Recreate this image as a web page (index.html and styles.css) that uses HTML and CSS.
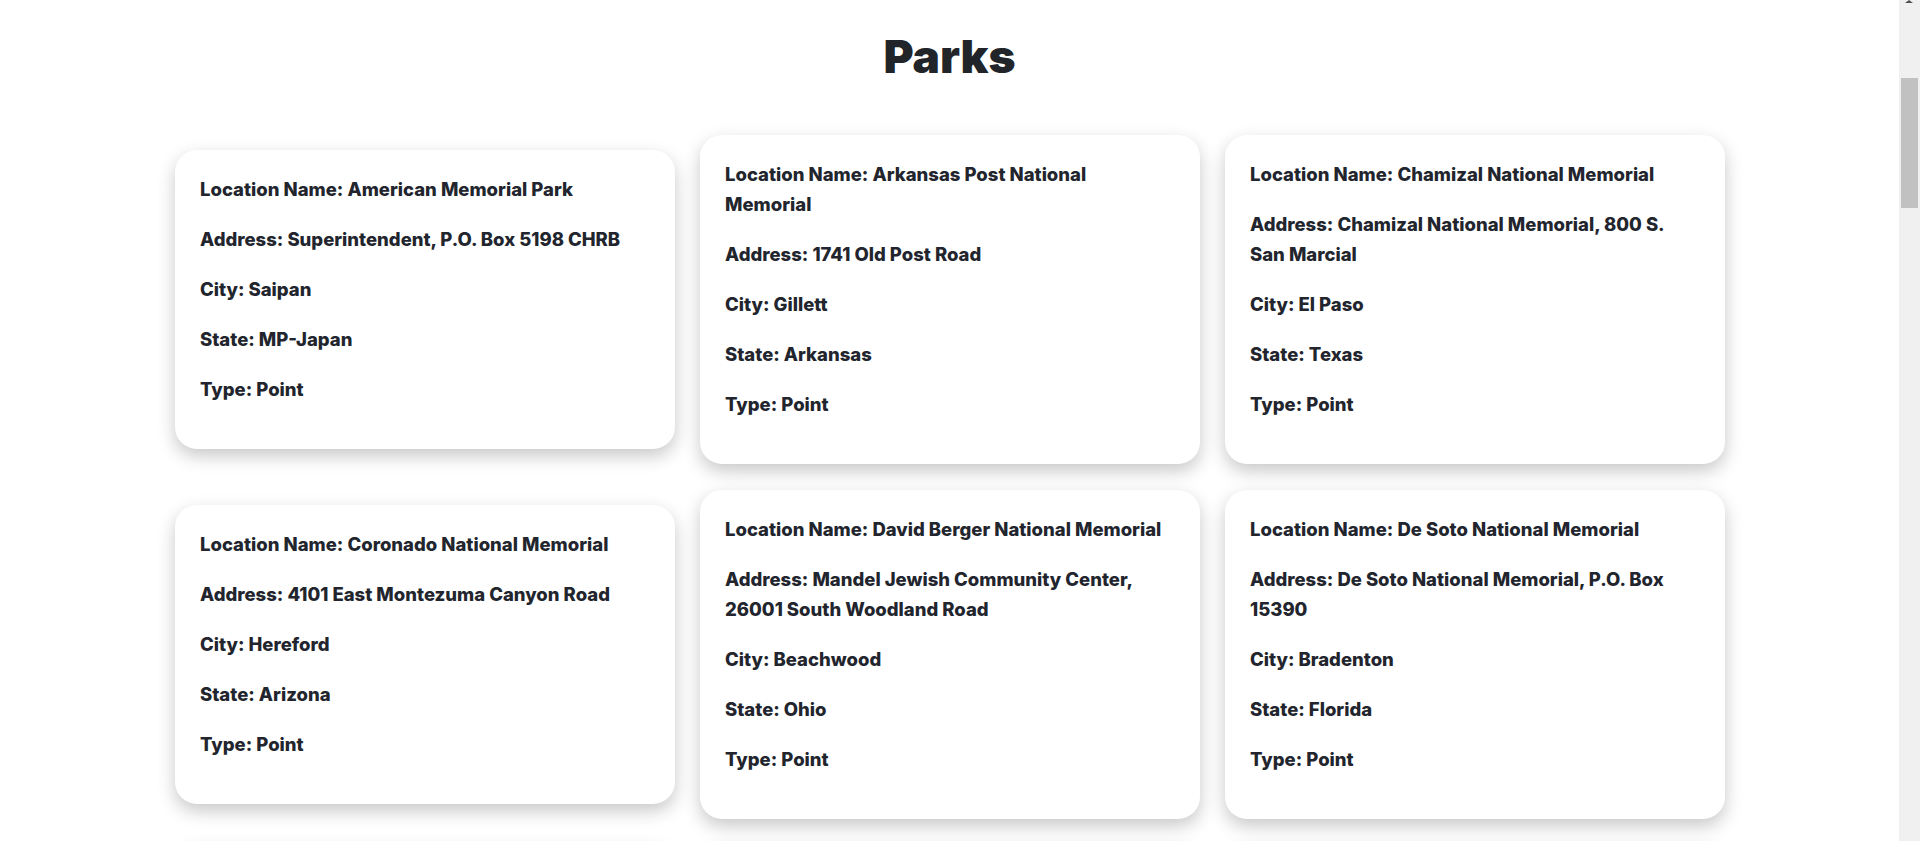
FILE: index.html
```html
<!DOCTYPE html>
<html lang="en">
<head>
<meta charset="utf-8">
<title>Parks</title>
<link rel="stylesheet" href="styles.css">
</head>
<body>
<main class="page">
  <h1 class="page-title">Parks</h1>
  <section class="park-grid">
    <article class="park-card">
      <p>Location Name: American Memorial Park</p>
      <p>Address: Superintendent, P.O. Box 5198 CHRB</p>
      <p>City: Saipan</p>
      <p>State: MP-Japan</p>
      <p>Type: Point</p>
    </article>
    <article class="park-card">
      <p>Location Name: Arkansas Post National Memorial</p>
      <p>Address: 1741 Old Post Road</p>
      <p>City: Gillett</p>
      <p>State: Arkansas</p>
      <p>Type: Point</p>
    </article>
    <article class="park-card">
      <p>Location Name: Chamizal National Memorial</p>
      <p>Address: Chamizal National Memorial, 800 S. San Marcial</p>
      <p>City: El Paso</p>
      <p>State: Texas</p>
      <p>Type: Point</p>
    </article>
    <article class="park-card">
      <p>Location Name: Coronado National Memorial</p>
      <p>Address: 4101 East Montezuma Canyon Road</p>
      <p>City: Hereford</p>
      <p>State: Arizona</p>
      <p>Type: Point</p>
    </article>
    <article class="park-card">
      <p>Location Name: David Berger National Memorial</p>
      <p>Address: Mandel Jewish Community Center, 26001 South Woodland Road</p>
      <p>City: Beachwood</p>
      <p>State: Ohio</p>
      <p>Type: Point</p>
    </article>
    <article class="park-card">
      <p>Location Name: De Soto National Memorial</p>
      <p>Address: De Soto National Memorial, P.O. Box 15390</p>
      <p>City: Bradenton</p>
      <p>State: Florida</p>
      <p>Type: Point</p>
    </article>
    <article class="park-card">
      <p>Location Name: Federal Hall National Memorial</p>
      <p>Address: 26 Wall Street</p>
      <p>City: New York</p>
      <p>State: New York</p>
      <p>Type: Point</p>
    </article>
    <article class="park-card">
      <p>Location Name: Flight 93 National Memorial</p>
      <p>Address: 6424 Lincoln Highway</p>
      <p>City: Stoystown</p>
      <p>State: Pennsylvania</p>
      <p>Type: Point</p>
    </article>
    <article class="park-card">
      <p>Location Name: Fort Caroline National Memorial</p>
      <p>Address: 12713 Fort Caroline Road</p>
      <p>City: Jacksonville</p>
      <p>State: Florida</p>
      <p>Type: Point</p>
    </article>
    <article class="park-card">
      <p>Location Name: Franklin Delano Roosevelt Memorial</p>
      <p>Address: 900 Ohio Drive SW</p>
      <p>City: Washington</p>
      <p>State: District of Columbia</p>
      <p>Type: Point</p>
    </article>
    <article class="park-card">
      <p>Location Name: General Grant National Memorial</p>
      <p>Address: Riverside Drive and West 122nd Street</p>
      <p>City: New York</p>
      <p>State: New York</p>
      <p>Type: Point</p>
    </article>
    <article class="park-card">
      <p>Location Name: Hamilton Grange National Memorial</p>
      <p>Address: 414 West 141st Street</p>
      <p>City: New York</p>
      <p>State: New York</p>
      <p>Type: Point</p>
    </article>
    <article class="park-card">
      <p>Location Name: Johnstown Flood National Memorial</p>
      <p>Address: 733 Lake Road</p>
      <p>City: South Fork</p>
      <p>State: Pennsylvania</p>
      <p>Type: Point</p>
    </article>
    <article class="park-card">
      <p>Location Name: Korean War Veterans Memorial</p>
      <p>Address: 900 Ohio Drive SW</p>
      <p>City: Washington</p>
      <p>State: District of Columbia</p>
      <p>Type: Point</p>
    </article>
    <article class="park-card">
      <p>Location Name: Lincoln Memorial</p>
      <p>Address: 2 Lincoln Memorial Circle NW</p>
      <p>City: Washington</p>
      <p>State: District of Columbia</p>
      <p>Type: Point</p>
    </article>
    <article class="park-card">
      <p>Location Name: Lyndon Baines Johnson Memorial Grove on the Potomac</p>
      <p>Address: George Washington Memorial Parkway</p>
      <p>City: McLean</p>
      <p>State: Virginia</p>
      <p>Type: Point</p>
    </article>
    <article class="park-card">
      <p>Location Name: Martin Luther King, Jr. Memorial</p>
      <p>Address: 1964 Independence Avenue SW</p>
      <p>City: Washington</p>
      <p>State: District of Columbia</p>
      <p>Type: Point</p>
    </article>
    <article class="park-card">
      <p>Location Name: Mount Rushmore National Memorial</p>
      <p>Address: 13000 Highway 244, Building 31, Suite 1</p>
      <p>City: Keystone</p>
      <p>State: South Dakota</p>
      <p>Type: Point</p>
    </article>
    <article class="park-card">
      <p>Location Name: Oklahoma City National Memorial</p>
      <p>Address: 620 North Harvey Avenue</p>
      <p>City: Oklahoma City</p>
      <p>State: Oklahoma</p>
      <p>Type: Point</p>
    </article>
    <article class="park-card">
      <p>Location Name: Perry's Victory and International Peace Memorial</p>
      <p>Address: 93 Delaware Avenue, P.O. Box 549</p>
      <p>City: Put-in-Bay</p>
      <p>State: Ohio</p>
      <p>Type: Point</p>
    </article>
    <article class="park-card">
      <p>Location Name: Port Chicago Naval Magazine National Memorial</p>
      <p>Address: 1000 Eastport Road</p>
      <p>City: Concord</p>
      <p>State: California</p>
      <p>Type: Point</p>
    </article>
    <article class="park-card">
      <p>Location Name: Roger Williams National Memorial</p>
      <p>Address: 282 North Main Street</p>
      <p>City: Providence</p>
      <p>State: Rhode Island</p>
      <p>Type: Point</p>
    </article>
    <article class="park-card">
      <p>Location Name: Thaddeus Kosciuszko National Memorial</p>
      <p>Address: 301 Pine Street</p>
      <p>City: Philadelphia</p>
      <p>State: Pennsylvania</p>
      <p>Type: Point</p>
    </article>
    <article class="park-card">
      <p>Location Name: Theodore Roosevelt Island</p>
      <p>Address: George Washington Memorial Parkway</p>
      <p>City: McLean</p>
      <p>State: Virginia</p>
      <p>Type: Point</p>
    </article>
    <article class="park-card">
      <p>Location Name: Thomas Jefferson Memorial</p>
      <p>Address: 16 East Basin Drive SW</p>
      <p>City: Washington</p>
      <p>State: District of Columbia</p>
      <p>Type: Point</p>
    </article>
    <article class="park-card">
      <p>Location Name: USS Arizona Memorial</p>
      <p>Address: 1 Arizona Memorial Place</p>
      <p>City: Honolulu</p>
      <p>State: Hawaii</p>
      <p>Type: Point</p>
    </article>
    <article class="park-card">
      <p>Location Name: Vietnam Veterans Memorial</p>
      <p>Address: 5 Henry Bacon Drive NW</p>
      <p>City: Washington</p>
      <p>State: District of Columbia</p>
      <p>Type: Point</p>
    </article>
    <article class="park-card">
      <p>Location Name: Washington Monument</p>
      <p>Address: 2 15th Street NW</p>
      <p>City: Washington</p>
      <p>State: District of Columbia</p>
      <p>Type: Point</p>
    </article>
    <article class="park-card">
      <p>Location Name: World War II Memorial</p>
      <p>Address: 1750 Independence Avenue SW</p>
      <p>City: Washington</p>
      <p>State: District of Columbia</p>
      <p>Type: Point</p>
    </article>
    <article class="park-card">
      <p>Location Name: Wright Brothers National Memorial</p>
      <p>Address: 1000 North Croatan Highway</p>
      <p>City: Kill Devil Hills</p>
      <p>State: North Carolina</p>
      <p>Type: Point</p>
    </article>
  </section>
</main>
<div class="scroll-rail" aria-hidden="true">
  <span class="scroll-arrow"></span>
  <span class="scroll-thumb"></span>
</div>
</body>
</html>
```

FILE: styles.css
```css
html, body {
  margin: 0;
  padding: 0;
  background: #ffffff;
}

body {
  font-family: "Inter", "Roboto", "Liberation Sans", sans-serif;
  color: #212529;
  padding-right: 21px;
}

.page {
  padding: 29px 0 60px;
}

.page-title {
  margin: 0 0 51px;
  text-align: center;
  font-size: 46px;
  line-height: 55px;
  font-weight: 900;
  letter-spacing: 0;
  color: #212529;
}

.park-grid {
  display: grid;
  grid-template-columns: repeat(3, 500px);
  column-gap: 25px;
  row-gap: 26px;
  align-items: center;
  padding-left: 175px;
}

.park-card {
  background: #ffffff;
  border-radius: 22px;
  padding: 24px 34px 25px 25px;
  box-shadow: 0 7px 18px rgba(0, 0, 0, 0.22);
}

.park-card p {
  margin: 0 0 20px;
  font-size: 18.5px;
  line-height: 30px;
  font-weight: 800;
  letter-spacing: 0;
  color: #22252d;
}

/* browser-style vertical scrollbar */
.scroll-rail {
  position: fixed;
  top: 0;
  right: 0;
  bottom: 0;
  width: 21px;
  background: #f0f0f0;
}

.scroll-arrow {
  position: absolute;
  top: 0;
  left: 6px;
  width: 0;
  height: 0;
  border-left: 4.5px solid transparent;
  border-right: 4.5px solid transparent;
  border-bottom: 3px solid #505050;
}

.scroll-thumb {
  position: absolute;
  top: 78px;
  left: 2px;
  width: 17px;
  height: 130px;
  background: #c1c1c1;
}
```
